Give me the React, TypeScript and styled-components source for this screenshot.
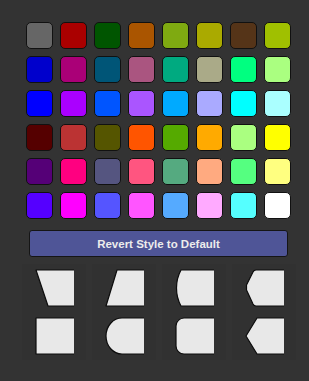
import styled, { createGlobalStyle } from "styled-components";

const Global = createGlobalStyle`
body {
    margin: 0;
    background: #333333;
    font-family: "Liberation Sans", Arial, sans-serif;
}
`

const Panel = styled.div`
width: 309px;
height: 381px;
background: #333333;
padding-top: 22px;
box-sizing: border-box;
`

const Swatches = styled.div`
display: grid;
grid-template-columns: repeat(8, 27px);
grid-auto-rows: 27px;
gap: 7px;
margin-left: 26px;
`

const Swatch = styled.div<{ $color: string }>`
background: ${(p) => p.$color};
border: 1px solid #111;
border-radius: 5px;
box-sizing: border-box;
`

const RevertButton = styled.button`
display: block;
margin: 11px 0 0 29px;
width: 259px;
height: 27px;
background: #4f5597;
border: 1px solid #151515;
border-radius: 3px;
color: #ececec;
font-family: "Liberation Sans", Arial, sans-serif;
font-weight: 700;
font-size: 11.5px;
padding: 0;
`

const Shapes = styled.div`
display: grid;
grid-template-columns: repeat(4, 64px);
grid-auto-rows: 48px;
column-gap: 6px;
margin: 7px 0 0 22px;
`

const ShapeCell = styled.div`
background: #313131;
display: flex;
align-items: center;
justify-content: center;
`

const colors = [
    "#666666", "#aa0000", "#005500", "#aa5500", "#7faa11", "#aaaa00", "#553418", "#a0c000",
    "#0000cc", "#aa0077", "#005577", "#aa5580", "#00aa80", "#aaaa88", "#00ff80", "#aaff80",
    "#0000ff", "#aa00ff", "#0055ff", "#aa55ff", "#00aaff", "#aaaaff", "#00ffff", "#aaffff",
    "#550000", "#bb3333", "#555500", "#ff5500", "#55aa00", "#ffaa00", "#aaff80", "#ffff00",
    "#550077", "#ff0080", "#555580", "#ff5580", "#55aa80", "#ffaa80", "#55ff80", "#ffff80",
    "#5500ff", "#ff00ff", "#5555ff", "#ff55ff", "#55aaff", "#ffaaff", "#55ffff", "#ffffff",
];

// left edge outlines, right side stays open
const shapes = [
    "M39 1 H1 L13 37 H39",
    "M39 1 H12 L1 37 H39",
    "M39 1 H6 C0 12 0 26 6 37 H39",
    "M39 1 H11 Q9 1 8 3 L1.5 16 V21 L8 35 Q9 37 11 37 H39",
    "M39 1 H1 V37 H39",
    "M39 1 H17 A16 18 0 0 0 17 37 H39",
    "M39 1 H9 A8 8 0 0 0 1 9 V29 A8 8 0 0 0 9 37 H39",
    "M39 1 H12 L1 19 L12 37 H39",
];

function Shape({ d }: { d: string }) {
    return (
        <svg width="40" height="38" viewBox="0 0 40 38" style={{ marginLeft: 2 }}>
            <path d={d + " Z"} fill="#e8e8e8" />
            <path d={d} fill="none" stroke="#0c0c0c" strokeWidth="1.2" strokeLinejoin="round" />
        </svg>
    );
}

function App() {
    return (
        <Panel>
            <Global />
            <Swatches>
                {colors.map((c, i) => (
                    <Swatch key={i} $color={c} />
                ))}
            </Swatches>
            <RevertButton>Revert Style to Default</RevertButton>
            <Shapes>
                {shapes.map((d, i) => (
                    <ShapeCell key={i}>
                        <Shape d={d} />
                    </ShapeCell>
                ))}
            </Shapes>
        </Panel>
    );
}

export default App;
